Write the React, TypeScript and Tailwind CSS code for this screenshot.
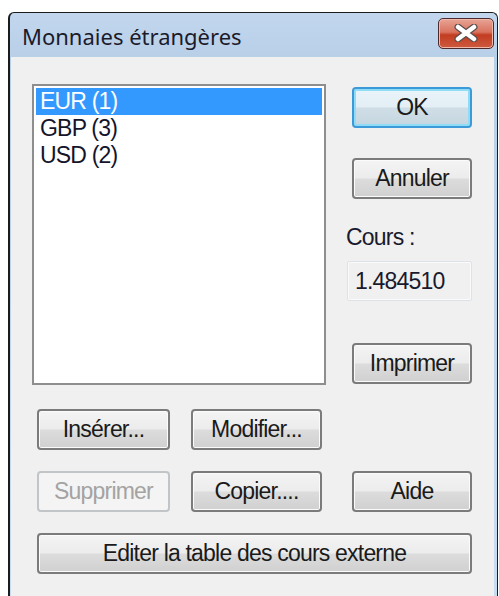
import type { ReactNode } from 'react';

const sans = { fontFamily: '"Liberation Sans", Arial, sans-serif' };

type BtnProps = { children: ReactNode; className?: string; primary?: boolean; disabled?: boolean };

function Btn({ children, className = '', primary, disabled }: BtnProps) {
  const frame = primary
    ? 'border-[#3c9ad8] shadow-[inset_0_0_0_2px_#8fdcf7] bg-[linear-gradient(#eaf4fa_0%,#e3eef5_48%,#cfdde6_52%,#c6d6e0_100%)]'
    : disabled
      ? 'border-[#c1c5c8] bg-[#f4f4f4] text-[#a3a3a3]'
      : 'border-[#7b7b7b] shadow-[inset_0_0_0_1px_#fbfbfb] bg-[linear-gradient(#f4f4f4_0%,#ececec_48%,#dcdcdc_52%,#d0d0d0_100%)]';
  return (
    <div
      style={sans}
      className={`flex h-[41px] items-center justify-center rounded-[4px] border-2 text-[23px] tracking-[-0.8px] ${
        disabled ? '' : 'text-[#1a1a1a]'
      } ${frame} ${className}`}
    >
      {children}
    </div>
  );
}

function CloseGlyph() {
  return (
    <svg width="26" height="18" viewBox="0 0 26 18">
      <path d="M5 3 L21 15 M21 3 L5 15" stroke="#5b4d4d" strokeWidth="7" strokeLinecap="round" />
      <path d="M5 3 L21 15 M21 3 L5 15" stroke="#ffffff" strokeWidth="4.5" strokeLinecap="round" />
    </svg>
  );
}

const currencies = ['EUR (1)', 'GBP (3)', 'USD (2)'];

export default function App() {
  return (
    <div className="h-[596px] w-[499px] overflow-hidden bg-white pl-[8px] pt-[12px]">
      <div className="flex h-[600px] w-[490px] flex-col rounded-tl-[6px] rounded-tr-[6px] border-l-2 border-t border-r border-[#1c1c1c] bg-[linear-gradient(#c2d7ee,#b8cfe8_45px,#c9dcf1)]">
        {/* caption */}
        <div className="flex h-[44px] shrink-0 items-center justify-between pl-[12px] pr-[3px]">
          <span
            style={{ fontFamily: '"Noto Sans", "Open Sans", sans-serif' }}
            className="mt-[2px] text-[22px] text-[#1b1b2a]"
          >
            Monnaies étrangères
          </span>
          <div className="mt-[-4px] flex h-[31px] w-[56px] items-center justify-center rounded-[5px] border border-[#4d2a2e] bg-[linear-gradient(#e8a496_0%,#d9735f_45%,#c23d22_55%,#cd5a3e_100%)] shadow-[inset_0_0_0_1px_#f0b8aa]">
            <CloseGlyph />
          </div>
        </div>

        {/* client area */}
        <div className="ml-[1px] mr-[3px] flex-1 bg-[#f0f0f0] pl-[21px] pt-[27px]">
          <div className="flex gap-[26px]">
            <div className="h-[301px] w-[294px] border-2 border-[#8e8e8e] bg-white px-[2px] pt-[2px]" style={sans}>
              {currencies.map((c, i) => (
                <div
                  key={c}
                  className={`flex h-[27px] items-center pl-[4px] text-[23px] tracking-[-0.8px] ${
                    i === 0 ? 'bg-[#3399ff] text-white' : 'text-[#14142b]'
                  }`}
                >
                  {c}
                </div>
              ))}
            </div>

            <div className="flex w-[120px] flex-col">
              <Btn primary className="mt-[3px] w-[120px]">OK</Btn>
              <Btn className="mt-[30px] w-[120px]">Annuler</Btn>
              <span style={sans} className="ml-[-6px] mt-[26px] text-[23px] leading-[24px] tracking-[-0.8px] text-[#1a1a2e]">
                Cours :
              </span>
              <div
                style={sans}
                className="ml-[-5px] mt-[12px] flex h-[40px] w-[125px] items-center rounded-[2px] border border-[#dde2e8] bg-[#f0f0f0] pl-[7px] text-[23px] tracking-[-0.8px] text-[#1a1a2e] shadow-[inset_0_0_0_1px_#fafafa]"
              >
                1.484510
              </div>
              <Btn className="mt-[42px] w-[120px]">Imprimer</Btn>
            </div>
          </div>

          <div className="ml-[5px] mt-[24px] flex flex-col gap-[22px]">
            <div className="flex gap-[21px]">
              <Btn className="w-[133px]">Insérer...</Btn>
              <Btn className="w-[131px]">Modifier...</Btn>
            </div>
            <div className="mt-[-1px] flex">
              <Btn disabled className="w-[133px]">Supprimer</Btn>
              <Btn className="ml-[21px] w-[131px]">Copier....</Btn>
              <Btn className="ml-[30px] w-[120px]">Aide</Btn>
            </div>
            <Btn className="mt-[-1px] w-[435px]">Editer la table des cours externe</Btn>
          </div>
        </div>
      </div>
    </div>
  );
}
